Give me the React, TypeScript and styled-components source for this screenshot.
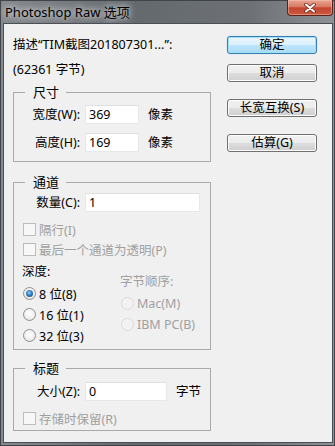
import React from "react";
import styled, { createGlobalStyle } from "styled-components";

const GlobalStyle = createGlobalStyle`
  html, body {
    margin: 0;
    padding: 0;
    background: #ffffff;
  }
  body {
    font-family: "Noto Sans", "Noto Sans CJK SC", sans-serif;
    font-size: 12.5px;
    color: #000000;
  }
`;

const Window = styled.div`
  width: 335px;
  height: 446px;
  box-sizing: border-box;
  display: flex;
  flex-direction: column;
  border: 1px solid #3f444a;
  padding: 0 1px 2px 2px;
  background: linear-gradient(to right, #868a8f 0%, #64696e 40%, #6d7176 75%, #8e9297 100%);
`;

const TitleBar = styled.div`
  height: 22px;
  display: flex;
  justify-content: space-between;
  align-items: flex-start;
`;

const Title = styled.div`
  padding: 3px 0 0 2px;
  font-size: 13px;
  line-height: 16px;
  color: #000000;
  text-shadow: 0 0 6px rgba(255, 255, 255, 0.9), 0 0 10px rgba(255, 255, 255, 0.6);
`;

const CloseButton = styled.div`
  width: 46px;
  height: 16px;
  margin-top: -1px;
  box-sizing: border-box;
  display: flex;
  align-items: center;
  justify-content: center;
  border: 1px solid #5e2219;
  border-top: none;
  border-radius: 0 0 4px 4px;
  background: linear-gradient(#e7a594 0%, #d97a63 45%, #c2462f 52%, #cb5a40 100%);
  box-shadow: inset 0 0 0 1px rgba(255, 200, 190, 0.45);
`;

const Client = styled.div`
  flex: 1;
  display: flex;
  align-items: flex-start;
  border: 1px solid #4a4f55;
  background: #f0f0f0;
  padding: 12px 0 0 9px;
`;

const LeftCol = styled.div`
  width: 198px;
  display: flex;
  flex-direction: column;
`;

const RightCol = styled.div`
  width: 90px;
  margin-left: 16px;
  display: flex;
  flex-direction: column;
`;

const Line = styled.div<{ $top?: number }>`
  line-height: 16px;
  height: 16px;
  white-space: nowrap;
  margin-top: ${(p) => p.$top ?? 0}px;
`;

const Button = styled.button<{ $primary?: boolean; $top?: number }>`
  height: 18px;
  width: 90px;
  box-sizing: border-box;
  margin: ${(p) => p.$top ?? 0}px 0 0 0;
  padding: 0;
  font-family: inherit;
  font-size: 12.5px;
  line-height: 16px;
  color: #000000;
  border-radius: 3px;
  border: 1px solid ${(p) => (p.$primary ? "#3c7fb1" : "#707070")};
  background: ${(p) =>
    p.$primary
      ? "linear-gradient(#eaf6fd 0%, #d9f0fc 50%, #bee6fd 51%, #a7d9f5 100%)"
      : "linear-gradient(#f2f2f2 0%, #ebebeb 50%, #dddddd 51%, #cfcfcf 100%)"};
  box-shadow: ${(p) =>
    p.$primary ? "inset 0 0 0 1px #9ee1f7, 0 0 1px #6cc4ea" : "inset 0 0 0 1px #fcfcfc"};
`;

const Group = styled.fieldset<{ $top: number; $pt: number; $pb: number }>`
  margin: ${(p) => p.$top}px 0 0 0;
  padding: ${(p) => p.$pt}px 0 ${(p) => p.$pb}px 9px;
  border: 1px solid #a9a9a9;
  min-width: 0;
`;

const Legend = styled.legend`
  padding: 0 7px 0 8px;
  margin-left: 2px;
  line-height: 16px;
  font-size: 13px;
`;

const FieldRow = styled.div<{ $top?: number }>`
  display: flex;
  align-items: center;
  height: 19px;
  margin-top: ${(p) => p.$top ?? 0}px;
`;

const FieldLabel = styled.span`
  width: 57px;
  margin-right: 5px;
  text-align: right;
  white-space: nowrap;
  line-height: 16px;
`;

const TextBox = styled.div<{ $w: number }>`
  width: ${(p) => p.$w}px;
  height: 19px;
  box-sizing: border-box;
  background: #ffffff;
  border: 1px solid #e6e8ec;
  border-top-color: #dcdfe4;
  padding: 0 3px;
  line-height: 17px;
`;

const Unit = styled.span`
  margin-left: 9px;
  line-height: 16px;
`;

const CheckRow = styled.div<{ $top?: number }>`
  display: flex;
  align-items: center;
  height: 16px;
  margin-top: ${(p) => p.$top ?? 0}px;
  color: #a0a0a0;
  white-space: nowrap;
`;

const CheckBox = styled.span`
  width: 13px;
  height: 13px;
  box-sizing: border-box;
  border: 1px solid #bcbcbc;
  background: #f7f7f7;
  margin-right: 3px;
  flex: none;
`;

const DepthArea = styled.div`
  display: flex;
  margin-top: 7px;
  margin-left: -1px;
`;

const DepthCol = styled.div<{ $w?: number; $pt?: number; $muted?: boolean }>`
  width: ${(p) => (p.$w ? `${p.$w}px` : "auto")};
  padding-top: ${(p) => p.$pt ?? 0}px;
  display: flex;
  flex-direction: column;
  gap: 5px;
  color: ${(p) => (p.$muted ? "#a0a0a0" : "#000000")};
`;

const RadioRow = styled.div`
  display: flex;
  align-items: center;
  height: 16px;
  padding-left: 1px;
  white-space: nowrap;
`;

const Radio = styled.span<{ $checked?: boolean; $disabled?: boolean }>`
  width: 13px;
  height: 13px;
  box-sizing: border-box;
  border-radius: 50%;
  margin-right: 3px;
  flex: none;
  display: flex;
  align-items: center;
  justify-content: center;
  border: 1px solid ${(p) => (p.$disabled ? "#dadada" : "#8f8f8f")};
  background: ${(p) =>
    p.$disabled
      ? "#f2f2f2"
      : "radial-gradient(circle at 50% 40%, #ffffff 0%, #f0f0f0 55%, #d4d4d4 100%)"};

  &::after {
    content: "";
    display: ${(p) => (p.$checked ? "block" : "none")};
    width: 7px;
    height: 7px;
    border-radius: 50%;
    background: radial-gradient(circle at 45% 40%, #8fd0f5 0%, #2f7ec0 45%, #163f78 100%);
  }
`;

const CloseIcon = () => (
  <svg width="12" height="10" viewBox="0 0 12 10">
    <path d="M2 1.5 L10 8.5 M10 1.5 L2 8.5" stroke="#6a261c" strokeWidth="3.6" strokeLinecap="round" />
    <path d="M2 1.5 L10 8.5 M10 1.5 L2 8.5" stroke="#ffffff" strokeWidth="2" strokeLinecap="round" />
  </svg>
);

export default function App() {
  return (
    <>
      <GlobalStyle />
      <Window>
        <TitleBar>
          <Title>Photoshop Raw 选项</Title>
          <CloseButton>
            <CloseIcon />
          </CloseButton>
        </TitleBar>
        <Client>
          <LeftCol>
            <Line $top={1}>描述“TIM截图201807301...”:</Line>
            <Line $top={9}>(62361 字节)</Line>

            <Group $top={6} $pt={5} $pb={9}>
              <Legend>尺寸</Legend>
              <FieldRow>
                <FieldLabel>宽度(W):</FieldLabel>
                <TextBox $w={54}>369</TextBox>
                <Unit>像素</Unit>
              </FieldRow>
              <FieldRow $top={9}>
                <FieldLabel>高度(H):</FieldLabel>
                <TextBox $w={54}>169</TextBox>
                <Unit>像素</Unit>
              </FieldRow>
            </Group>

            <Group $top={12} $pt={3} $pb={6}>
              <Legend>通道</Legend>
              <FieldRow>
                <FieldLabel>数量(C):</FieldLabel>
                <TextBox $w={115}>1</TextBox>
              </FieldRow>
              <CheckRow $top={9}>
                <CheckBox />
                隔行(I)
              </CheckRow>
              <CheckRow $top={4}>
                <CheckBox />
                最后一个通道为透明(P)
              </CheckRow>
              <DepthArea>
                <DepthCol $w={98}>
                  <Line>深度:</Line>
                  <RadioRow>
                    <Radio $checked />8 位(8)
                  </RadioRow>
                  <RadioRow>
                    <Radio />16 位(1)
                  </RadioRow>
                  <RadioRow>
                    <Radio />32 位(3)
                  </RadioRow>
                </DepthCol>
                <DepthCol $pt={10} $muted>
                  <Line>字节顺序:</Line>
                  <RadioRow>
                    <Radio $disabled />Mac(M)
                  </RadioRow>
                  <RadioRow>
                    <Radio $disabled />IBM PC(B)
                  </RadioRow>
                </DepthCol>
              </DepthArea>
            </Group>

            <Group $top={10} $pt={6} $pb={4}>
              <Legend>标题</Legend>
              <FieldRow>
                <FieldLabel>大小(Z):</FieldLabel>
                <TextBox $w={82}>0</TextBox>
                <Unit>字节</Unit>
              </FieldRow>
              <CheckRow $top={9}>
                <CheckBox />
                存储时保留(R)
              </CheckRow>
            </Group>
          </LeftCol>

          <RightCol>
            <Button $primary>确定</Button>
            <Button $top={10}>取消</Button>
            <Button $top={17}>长宽互换(S)</Button>
            <Button $top={17}>估算(G)</Button>
          </RightCol>
        </Client>
      </Window>
    </>
  );
}
